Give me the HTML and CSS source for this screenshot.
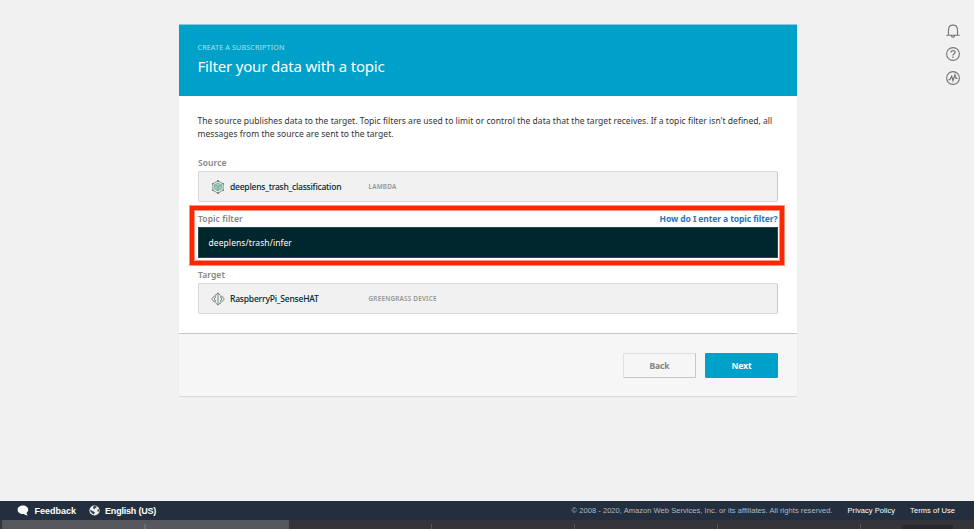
FILE: index.html
```html
<!DOCTYPE html>
<html lang="en">
<head>
<meta charset="utf-8">
<title>Create a subscription</title>
<link rel="stylesheet" href="styles.css">
</head>
<body>
<main class="stage">
  <section class="card">
    <header class="card-header">
      <div class="eyebrow">CREATE A SUBSCRIPTION</div>
      <h1>Filter your data with a topic</h1>
    </header>
    <div class="card-body">
      <p class="intro">The source publishes data to the target. Topic filters are used to limit or control the data that the target receives. If a topic filter isn't defined, all<br>messages from the source are sent to the target.</p>
      <div class="field">
        <div class="label"><span>Source</span></div>
        <div class="box">
          <svg class="icon" viewBox="0 0 14 14"><path d="M7 .8 12.2 3.8V10.2L7 13.2 1.8 10.2V3.8Z" fill="none" stroke="#747c7c" stroke-width=".8"/><path d="M7 3 10.5 4.8V9L7 11 3.5 9V4.8Z" fill="#9accbd" stroke="#5d998c" stroke-width=".6"/><path d="M3.5 4.8 7 6.7 10.5 4.8M7 6.7V11" fill="none" stroke="#5d998c" stroke-width=".6"/><g fill="#666f6f"><circle cx="7" cy="1" r=".9"/><circle cx="12.2" cy="3.8" r=".8"/><circle cx="12.2" cy="10.2" r=".8"/><circle cx="7" cy="13" r=".9"/><circle cx="1.8" cy="10.2" r=".8"/><circle cx="1.8" cy="3.8" r=".8"/></g></svg>
          <span class="name function">deeplens_trash_classification</span><span class="kind">LAMBDA</span>
        </div>
      </div>
      <div class="field">
        <div class="label"><span>Topic filter</span><a class="help">How do I enter a topic filter?</a></div>
        <div class="box input">deeplens/trash/infer</div>
        <div class="highlight"></div>
      </div>
      <div class="field">
        <div class="label"><span>Target</span></div>
        <div class="box">
          <svg class="icon" viewBox="0 0 14 14"><path d="M4.7 3.2 7 .8 9.3 3.2M10.7 3.9 13.3 7 10.7 10.1M9.3 10.8 7 13.2 4.7 10.8M3.3 10.1.7 7 3.3 3.9M7 1V13M4.2 3.5V6L3 7 4.2 8V10.5M9.8 3.5V6L11 7 9.8 8V10.5" fill="none" stroke="#5f6b6b" stroke-width=".8"/><g fill="#69b79f"><circle cx="4.6" cy="3" r=".8"/><circle cx="11" cy="4.7" r=".8"/><circle cx="3" cy="9.5" r=".8"/><circle cx="9.4" cy="11" r=".8"/></g></svg>
          <span class="name device">RaspberryPi_SenseHAT</span><span class="kind">GREENGRASS DEVICE</span>
        </div>
      </div>
    </div>
    <footer class="card-footer"><button class="btn">Back</button><button class="btn primary">Next</button></footer>
  </section>
  <nav class="tools">
    <svg viewBox="0 0 14 14"><path d="M.3 11.2H13.7M2.5 11V6C2.5 2.9 4.2 1.1 7 1.1S11.5 2.9 11.5 6V11M5.3 11.6C5.6 13.6 8.4 13.6 8.7 11.6M7 .2V1.2"/></svg>
    <svg viewBox="0 0 14 14"><circle cx="7" cy="7" r="6.4"/><path d="M5 5.5C5.1 2.9 9.1 3 9.1 5.3 9.1 6.9 7 6.8 7 8.5M7 9.6V10.9" stroke-width="1.3"/></svg>
    <svg viewBox="0 0 14 14"><circle cx="7" cy="7" r="6.4"/><path d="M2.4 8.7H3.9L5.7 5.2 7 9.7 9 3.8 10 7.4H11.5" stroke-width="1.2"/></svg>
  </nav>
</main>
<footer class="site">
  <svg class="bubble" viewBox="0 0 12 11"><path d="M6 .5C9 .5 11.2 2.3 11.2 4.8 11.2 6.2 10.4 7.3 9.5 8 9.5 9 10.2 9.8 11 10.4 9 10.4 7.8 9.7 7 9 3.5 9.4.6 7.7.6 4.8.6 2.3 3 .5 6 .5Z" fill="#fff"/></svg>
  <span class="feedback">Feedback</span>
  <svg class="globe" viewBox="0 0 11 11"><circle cx="5.5" cy="5.5" r="5.1" fill="#eef0f2"/><path d="M5 1 7.4 1.3 7.6 2.6 6 3.3 5.4 4.5 4.4 3.6 4 2.2ZM8.4 4.6 9.8 4.3 10 5.5 9.3 7 8.4 6.2ZM1.2 4.6 3.4 5.9 5.8 7 5.5 8.6 4.3 9.6 2.9 8 1.4 6.5Z" fill="#354052"/></svg>
  <span class="language">English (US)</span>
  <span class="copyright">© 2008 - 2020, Amazon Web Services, Inc. or its affiliates. All rights reserved.</span>
  <span class="policy">Privacy Policy</span>
  <span class="policy">Terms of Use</span>
</footer>
<div class="strip"><i class="active"></i><i></i><i></i><i></i><i></i><i></i><i class="last"></i></div>
</body>
</html>
```

FILE: styles.css
```css
* { box-sizing: border-box; }
body { margin: 0; width: 974px; height: 529px; overflow: hidden; background: #f1f1f1; font-family: "Noto Sans", sans-serif; color: #333; display: flex; flex-direction: column; white-space: nowrap; }
.stage { height: 501px; flex: none; display: flex; align-items: flex-start; padding: 24px 14px 0 179px; justify-content: space-between; }
.card { width: 618px; height: 372px; background: #fff; box-shadow: 0 1px 1px #d9d9d9; display: flex; flex-direction: column; }
.card-header { height: 72px; flex: none; background: #00a1c9; border-top: 1px solid #84cbdd; padding: 16px 18.5px 0; color: #fff; }
.eyebrow { height: 12px; font-size: 7.2px; line-height: 12px; letter-spacing: .12px; color: #a0e3f3; }
h1 { margin: 3px 0 0; font-size: 15px; line-height: 20px; font-weight: 400; letter-spacing: -.18px; }
.card-body { height: 237px; flex: none; padding: 19px 19px 0; }
.intro { margin: 0 0 17px -.5px; font-size: 8.5px; line-height: 12.5px; letter-spacing: .03px; }
.field { height: 56px; position: relative; }
.label { height: 14px; display: flex; justify-content: space-between; font-size: 8.5px; line-height: 12px; font-weight: 600; letter-spacing: .08px; color: #858585; }
.help { color: #2875b9; font-weight: 700; letter-spacing: -.09px; margin-right: .5px; }
.box { height: 31px; display: flex; align-items: center; background: #f1f1f1; border: 1px solid #d5dbdb; border-right-color: #c5caca; border-radius: 2px; padding-left: 11.5px; }
.icon { width: 14px; height: 14px; margin-right: 5.5px; }
.name { width: 138.5px; font-size: 8.5px; font-weight: 500; color: #00252e; }
.function { letter-spacing: -.22px; }
.device { letter-spacing: -.2px; }
.kind { font-size: 6.4px; font-weight: 600; letter-spacing: .19px; color: #959595; }
.input { background: #00262e; border-color: #294a51; border-radius: 0; padding-left: 9.5px; color: #fff; font-size: 8.5px; letter-spacing: .08px; }
.highlight { position: absolute; left: -8px; top: -7px; width: 594px; height: 59px; border: 4px solid #ff2600; box-shadow: 0 0 0 1px #ff260080, inset 0 0 0 1px #ff260080; }
.card-footer { flex: 1; background: #f6f6f6; border-top: 1px solid #c6c6c6; display: flex; justify-content: flex-end; gap: 9px; padding: 19px 19px 0; }
.btn { width: 73px; height: 25px; padding: 0; border: 1px solid #c6c6c6; border-top-color: #dedede; border-left-color: #e1e1e1; border-radius: 1px; background: #f6f6f6; color: #838383; font: 700 8.5px "Noto Sans", sans-serif; letter-spacing: -.1px; }
.primary { background: #00a1c9; border-color: #00a1c9; color: #fff; }
.tools { display: flex; flex-direction: column; gap: 9.3px; }
.tools svg { width: 14px; height: 14px; fill: none; stroke: #777; stroke-width: 1.1; }
.site { height: 19px; flex: none; background: #232f3e; color: #fff; display: flex; align-items: center; font-family: "Liberation Sans", Arial, sans-serif; font-size: 7.5px; padding: 0 19px 0 17px; }
.bubble { width: 12px; height: 11px; margin-right: 5.5px; }
.globe { width: 11px; height: 11px; margin: 0 5px 0 13px; }
.feedback, .language { font-size: 9px; font-weight: 700; }
.language { letter-spacing: -.2px; }
.copyright { margin-left: auto; letter-spacing: .05px; color: #b4b9c0; }
.policy { margin-left: 15px; letter-spacing: .06px; }
.strip { height: 9px; background: linear-gradient(#353539 7px, #39333a); display: flex; align-items: flex-end; padding-left: 2px; }
.strip i { width: 143px; height: 5px; flex: none; border-right: 1px solid #56565a; }
.strip .active { width: 287px; height: 9px; background: linear-gradient(90deg, transparent 142px, #6b6b6f 142px, #6b6b6f 144px, transparent 144px) 0 4px no-repeat, #56575b; }
.strip i:nth-child(6) { border-right: 0; width: 41px; }
.strip .last { width: 51px; height: 4px; background: #29292d; border: 0; }
```
